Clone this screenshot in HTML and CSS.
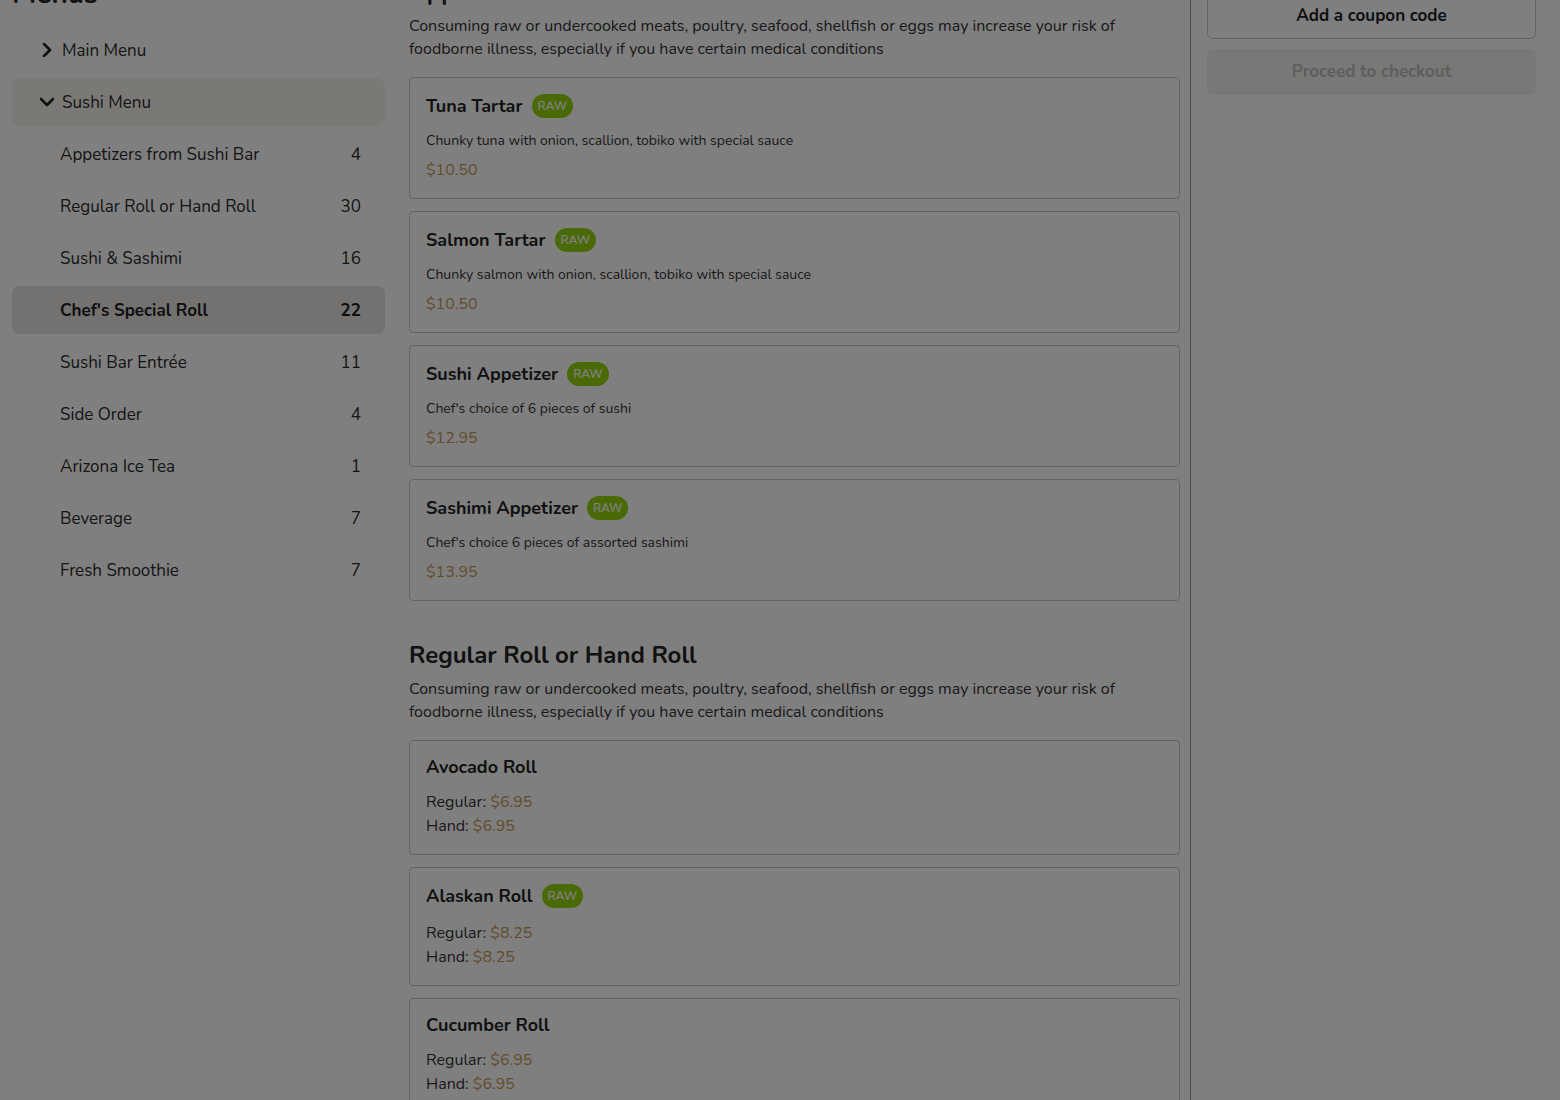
FILE: index.html
```html
<!DOCTYPE html>
<html lang="en">
<head>
<meta charset="utf-8">
<title>Menu</title>
<link rel="stylesheet" href="styles.css">
</head>
<body>
<div class="page">
  <aside class="sidebar">
    <h2 class="sidebar-title">Menus</h2>
    <ul class="menu-list">
      <li class="menu-row">
        <svg class="chev" viewBox="0 0 14 14" width="14" height="14"><path d="M4 1 L10 7 L4 13" fill="none" stroke="#222" stroke-width="2.6" stroke-linecap="round" stroke-linejoin="round"/></svg>
        <span>Main Menu</span>
      </li>
      <li class="menu-row open">
        <svg class="chev" viewBox="0 0 14 14" width="14" height="14"><path d="M1 4 L7 10 L13 4" fill="none" stroke="#222" stroke-width="2.6" stroke-linecap="round" stroke-linejoin="round"/></svg>
        <span>Sushi Menu</span>
      </li>
      <li class="cat-row"><span>Appetizers from Sushi Bar</span><span>4</span></li>
      <li class="cat-row"><span>Regular Roll or Hand Roll</span><span>30</span></li>
      <li class="cat-row"><span>Sushi &amp; Sashimi</span><span>16</span></li>
      <li class="cat-row active"><span>Chef's Special Roll</span><span>22</span></li>
      <li class="cat-row"><span>Sushi Bar Entrée</span><span>11</span></li>
      <li class="cat-row"><span>Side Order</span><span>4</span></li>
      <li class="cat-row"><span>Arizona Ice Tea</span><span>1</span></li>
      <li class="cat-row"><span>Beverage</span><span>7</span></li>
      <li class="cat-row"><span>Fresh Smoothie</span><span>7</span></li>
    </ul>
  </aside>

  <main class="content">
    <section class="section">
      <h2 class="section-title">Appetizers from Sushi Bar</h2>
      <p class="section-note">Consuming raw or undercooked meats, poultry, seafood, shellfish or eggs may increase your risk of foodborne illness, especially if you have certain medical conditions</p>
      <div class="cards">
        <div class="card">
          <div class="card-head"><h3>Tuna Tartar</h3><span class="badge">RAW</span></div>
          <p class="desc">Chunky tuna with onion, scallion, tobiko with special sauce</p>
          <p class="price">$10.50</p>
        </div>
        <div class="card">
          <div class="card-head"><h3>Salmon Tartar</h3><span class="badge">RAW</span></div>
          <p class="desc">Chunky salmon with onion, scallion, tobiko with special sauce</p>
          <p class="price">$10.50</p>
        </div>
        <div class="card">
          <div class="card-head"><h3>Sushi Appetizer</h3><span class="badge">RAW</span></div>
          <p class="desc">Chef's choice of 6 pieces of sushi</p>
          <p class="price">$12.95</p>
        </div>
        <div class="card">
          <div class="card-head"><h3>Sashimi Appetizer</h3><span class="badge">RAW</span></div>
          <p class="desc">Chef's choice 6 pieces of assorted sashimi</p>
          <p class="price">$13.95</p>
        </div>
      </div>
    </section>

    <section class="section">
      <h2 class="section-title">Regular Roll or Hand Roll</h2>
      <p class="section-note">Consuming raw or undercooked meats, poultry, seafood, shellfish or eggs may increase your risk of foodborne illness, especially if you have certain medical conditions</p>
      <div class="cards">
        <div class="card">
          <div class="card-head"><h3>Avocado Roll</h3></div>
          <div class="variants">
            <p>Regular: <span class="amt">$6.95</span></p>
            <p>Hand: <span class="amt">$6.95</span></p>
          </div>
        </div>
        <div class="card">
          <div class="card-head"><h3>Alaskan Roll</h3><span class="badge">RAW</span></div>
          <div class="variants">
            <p>Regular: <span class="amt">$8.25</span></p>
            <p>Hand: <span class="amt">$8.25</span></p>
          </div>
        </div>
        <div class="card">
          <div class="card-head"><h3>Cucumber Roll</h3></div>
          <div class="variants">
            <p>Regular: <span class="amt">$6.95</span></p>
            <p>Hand: <span class="amt">$6.95</span></p>
          </div>
        </div>
      </div>
    </section>
  </main>

  <aside class="cart">
    <button class="btn coupon">Add a coupon code</button>
    <button class="btn checkout" disabled>Proceed to checkout</button>
  </aside>
</div>
<div class="backdrop"></div>
</body>
</html>
```
FILE: styles.css
```css
* { box-sizing: border-box; }
html, body { margin: 0; padding: 0; }
body {
  font-family: "Nunito", "Lato", "Noto Sans", sans-serif;
  color: #333;
  background: #fff;
  height: 1100px;
  overflow: hidden;
}
.page {
  display: flex;
  align-items: flex-start;
  margin-top: -24px;
  padding-left: 12px;
}
.sidebar {
  width: 373px;
  flex: none;
}
.sidebar-title {
  margin: 0;
  font-size: 28px;
  line-height: 36px;
  font-weight: 700;
  color: #222;
}
.menu-list {
  list-style: none;
  margin: 14px 0 0;
  padding: 0;
  display: flex;
  flex-direction: column;
  gap: 4px;
}
.menu-row {
  height: 48px;
  display: flex;
  align-items: center;
  gap: 8px;
  padding-left: 28px;
  font-size: 17px;
  color: #2a2a2a;
  border-radius: 8px;
}
.menu-row.open { background: #f4f2ec; }
.chev { flex: none; }
.cat-row {
  height: 48px;
  display: flex;
  align-items: center;
  justify-content: space-between;
  padding: 0 24px 0 48px;
  font-size: 17px;
  color: #2a2a2a;
  border-radius: 8px;
}
.cat-row.active {
  background: #e6e4e0;
  font-weight: 700;
  color: #1e1e1e;
}
.content {
  width: 771px;
  flex: none;
  margin-left: 24px;
}
.section + .section { margin-top: 38px; }
.section-title {
  margin: 0;
  font-size: 24px;
  line-height: 32px;
  font-weight: 700;
  color: #222;
}
.section-note {
  margin: 7px 0 0;
  font-size: 16px;
  line-height: 23px;
  color: #333;
}
.cards {
  margin-top: 16px;
  display: flex;
  flex-direction: column;
  gap: 12px;
}
.card {
  border: 1px solid #c8c8c8;
  border-radius: 4px;
  padding: 16px 16px 16px;
  background: #fff;
}
.card-head {
  display: flex;
  align-items: center;
  gap: 9px;
}
.card-head h3 {
  margin: 0;
  font-size: 18px;
  line-height: 20px;
  font-weight: 700;
  color: #222;
}
.badge {
  display: inline-flex;
  align-items: center;
  height: 24px;
  padding: 0 6px;
  border-radius: 12px;
  background: #92d40c;
  color: #fff;
  font-size: 12px;
  font-weight: 600;
}
.desc {
  margin: 13px 0 0;
  font-size: 14px;
  line-height: 20px;
  color: #333;
}
.price {
  margin: 7px 0 0;
  font-size: 16px;
  line-height: 24px;
  color: #c49a56;
}
.variants { margin-top: 13px; }
.variants p {
  margin: 0;
  font-size: 16px;
  line-height: 24px;
  color: #333;
}
.amt { color: #c49a56; }
.cart {
  flex: 1;
  margin-left: 10px;
  border-left: 1px solid #999;
  padding: 14px 24px 0 16px;
  min-height: 1200px;
  display: flex;
  flex-direction: column;
  gap: 10px;
}
.btn {
  font-family: inherit;
  font-size: 17px;
  font-weight: 700;
  border-radius: 6px;
  width: 100%;
}
.coupon {
  height: 49px;
  padding-top: 2px;
  background: #fff;
  border: 1px solid #c8c8c8;
  color: #222;
}
.checkout {
  height: 46px;
  padding-bottom: 2px;
  background: #f0f0ec;
  border: none;
  color: #bdbdbd;
}
.backdrop {
  position: fixed;
  inset: 0;
  background: rgba(0, 0, 0, 0.5);
}
```
